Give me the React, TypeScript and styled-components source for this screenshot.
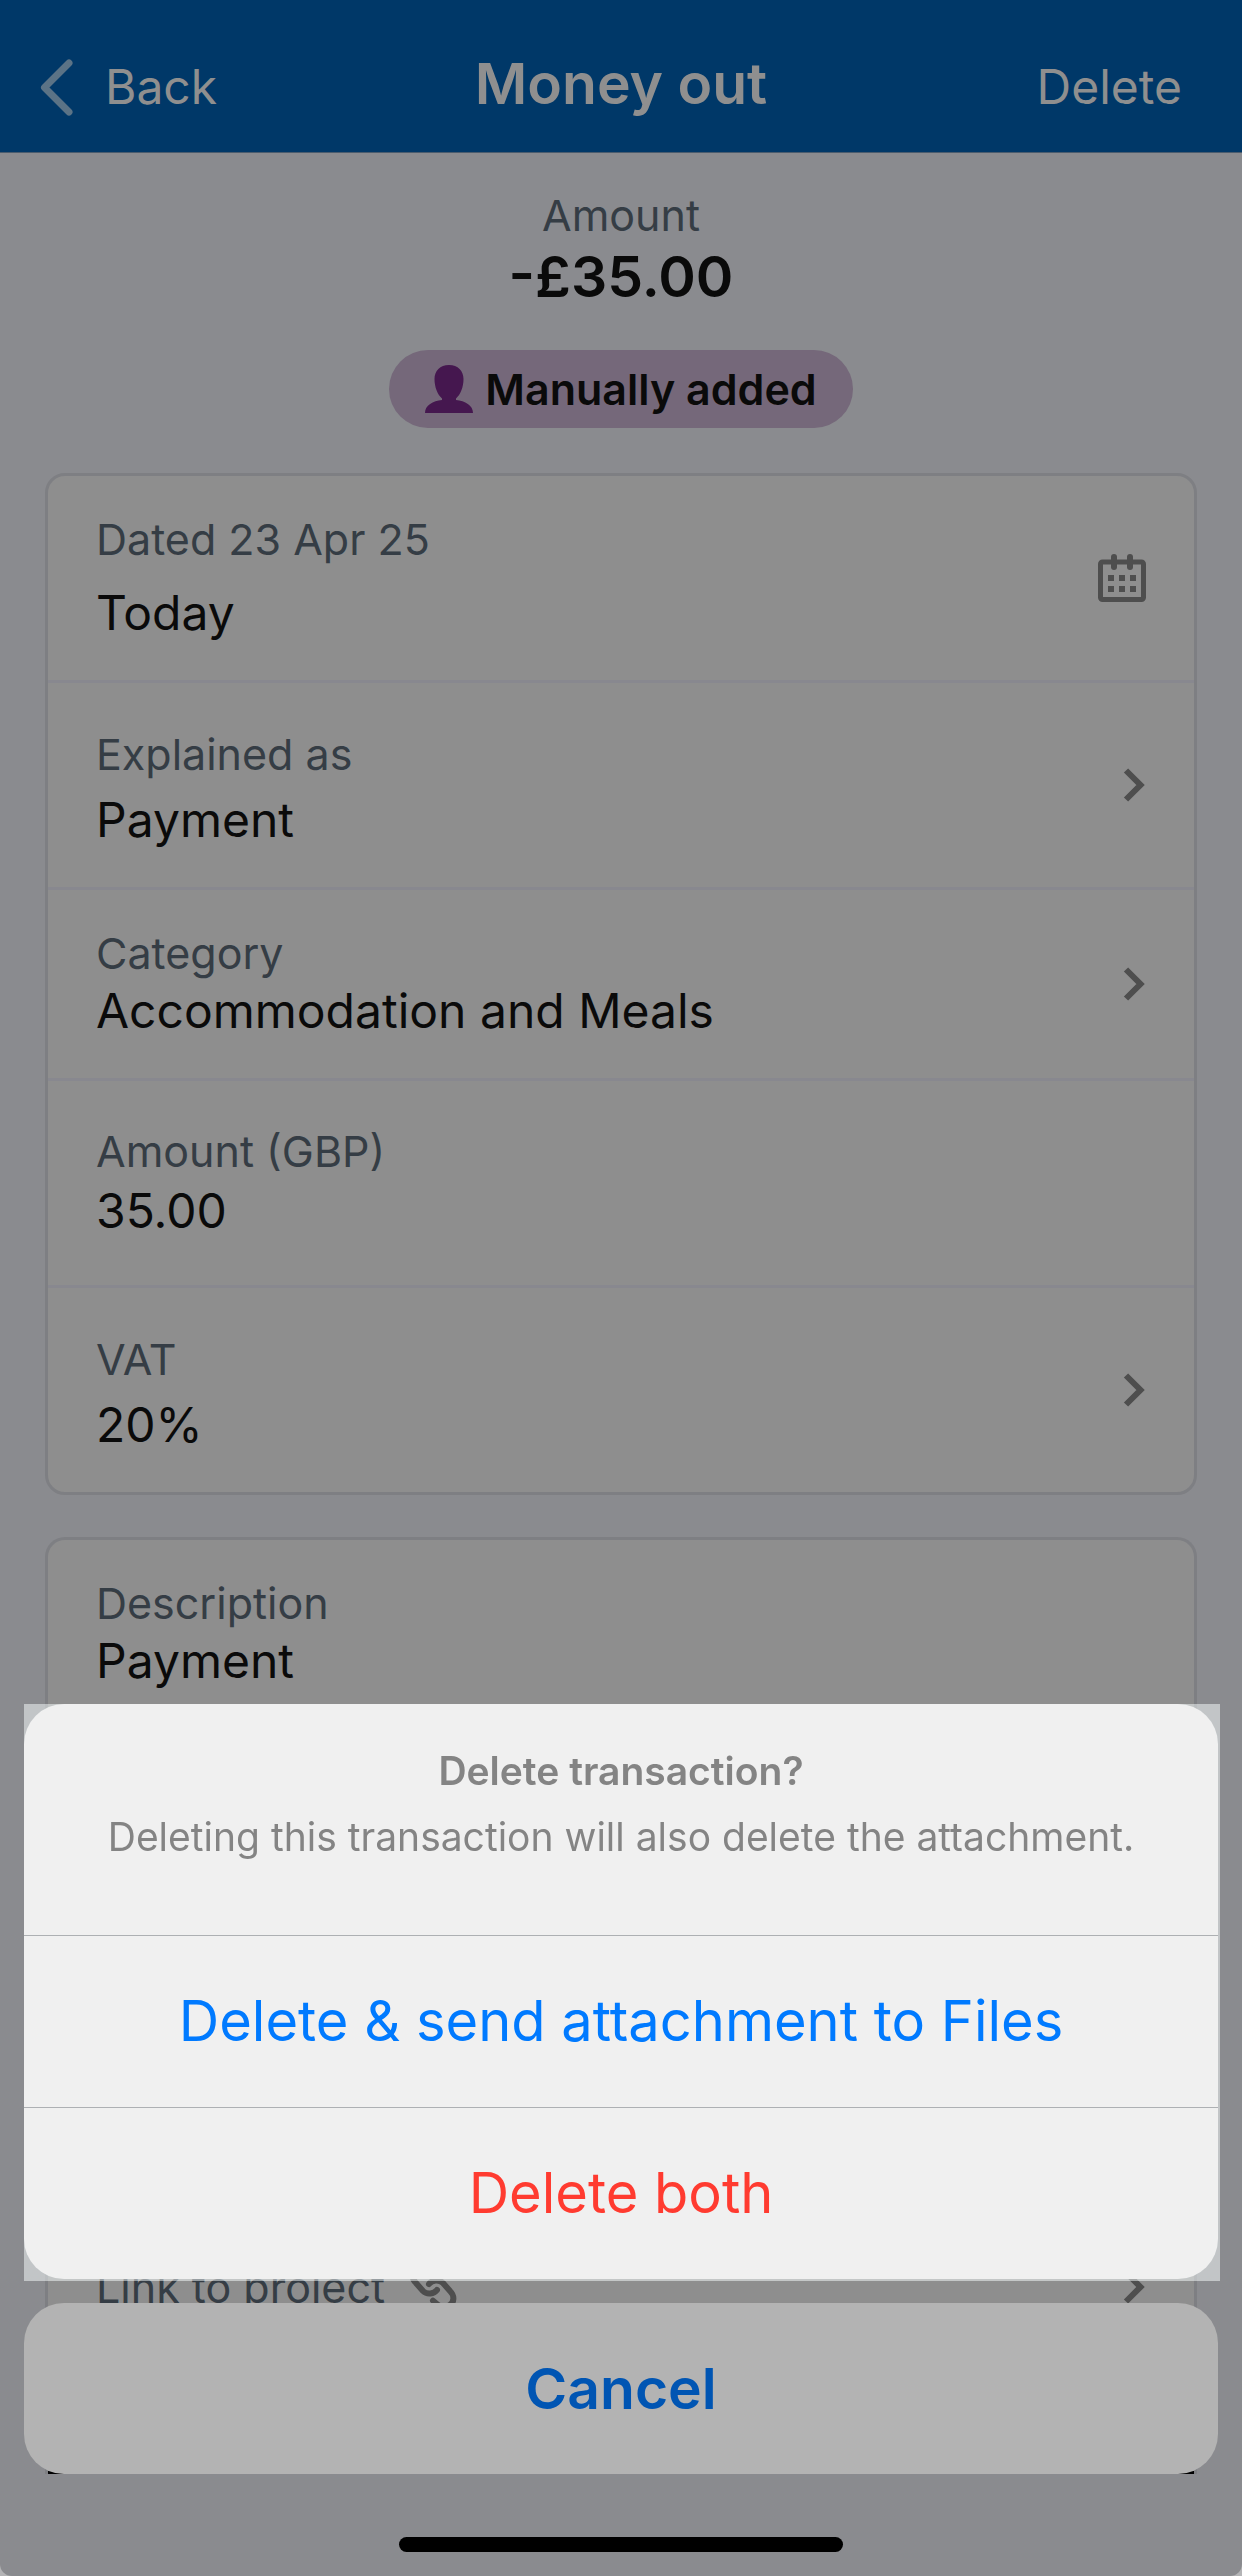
import React from "react";
import styled, { createGlobalStyle } from "styled-components";

const GlobalStyle = createGlobalStyle`
  *, *::before, *::after { box-sizing: border-box; }
  html { background: #b4b4b6; }
  body {
    margin: 0;
    font-family: Inter, Roboto, "Liberation Sans", sans-serif;
    color: #0a0a0a;
  }
  button {
    margin: 0;
    padding: 0;
    border: 0;
    background: none;
    font: inherit;
    color: inherit;
    text-align: inherit;
    cursor: pointer;
  }
`;

const Screen = styled.div`
  min-height: 100vh;
  display: flex;
  flex-direction: column;
  background: #8a8b8f;
  border-radius: 0 0 12px 12px;
  overflow: hidden;
`;

const Header = styled.header`
  display: grid;
  grid-template-columns: 1fr auto 1fr;
  align-items: end;
  padding: 48px 40px 32px;
  background: #003868;
  border-bottom: 1px solid #4a5c6e;
  color: #8f8f8f;
`;

const HeaderButton = styled.button<{ $end?: boolean }>`
  display: flex;
  align-items: center;
  justify-self: ${(p) => (p.$end ? "end" : "start")};
  gap: 32px;
  padding-right: ${(p) => (p.$end ? "20px" : "0")};
  font-size: 48px;
  line-height: 66px;
`;

const Title = styled.h1`
  margin: 0;
  font-size: 57px;
  font-weight: 600;
  line-height: 72px;
`;

const Content = styled.main`
  flex: 1;
  display: flex;
  flex-direction: column;
  padding: 0 45px;
`;

const Summary = styled.section`
  display: flex;
  flex-direction: column;
  align-items: center;
  padding: 36px 0 45px;
`;

const Label = styled.span`
  font-size: 43px;
  line-height: 52px;
  color: #353d45;
`;

const Total = styled.strong`
  font-size: 57px;
  font-weight: 600;
  line-height: 72px;
`;

const Tag = styled.span`
  display: flex;
  align-items: center;
  gap: 12px;
  margin-top: 37px;
  padding: 0 36px;
  border-radius: 39px;
  background: #75687a;
  font-size: 43px;
  font-weight: 600;
  line-height: 78px;
`;

const Card = styled.section<{ $grow?: boolean }>`
  display: flex;
  flex-direction: column;
  flex: ${(p) => (p.$grow ? "1" : "none")};
  border: 3px solid #7e7f83;
  border-bottom-width: ${(p) => (p.$grow ? "0" : "3px")};
  border-radius: ${(p) => (p.$grow ? "20px 20px 0 0" : "20px")};
  background: #8e8e8e;
  & + & { margin-top: 42px; }
`;

const Row = styled.button<{ $roomy?: boolean }>`
  display: flex;
  align-items: center;
  justify-content: space-between;
  padding: ${(p) => (p.$roomy ? "44px" : "37px")} 48px;
  & + &, & + div { border-top: 3px solid #88888f; }
`;

const Field = styled.span<{ $gap: number; $drop?: boolean }>`
  display: flex;
  flex-direction: column;
  gap: ${(p) => p.$gap}px;
  padding-top: ${(p) => (p.$drop ? "8px" : "0")};
`;

const Value = styled.span`
  font-size: 48px;
  line-height: 60px;
`;

const AttachmentArea = styled.div`
  height: 492px;
  border-bottom: 3px solid #88888f;
`;

const LinkRow = styled.button`
  display: flex;
  align-items: center;
  justify-content: space-between;
  padding: 41px 48px;
`;

const LinkLabel = styled(Label)`
  display: flex;
  align-items: center;
  gap: 24px;
`;

const CardEnd = styled.div`
  flex: 1;
  border-top: 3px solid #88888f;
  border-bottom: 3px solid #000;
`;

const SafeArea = styled.footer`
  height: 102px;
`;

const Overlay = styled.div`
  position: fixed;
  inset: 0;
  display: flex;
  flex-direction: column;
  justify-content: flex-end;
  padding: 0 22px 0 24px;
`;

const SheetBacking = styled.div`
  padding: 0 2px 2px 0;
  background: rgba(250, 255, 255, 0.5);
`;

const Sheet = styled.section`
  display: flex;
  flex-direction: column;
  border-radius: 40px;
  background: #f0f0f0;
  overflow: hidden;
`;

const SheetHead = styled.div`
  display: flex;
  flex-direction: column;
  align-items: center;
  gap: 14px;
  padding: 41px 40px 72px;
  color: #848484;
  font-size: 39px;
  line-height: 52px;
`;

const SheetTitle = styled.h2`
  margin: 0;
  font-size: 39px;
  font-weight: 600;
  line-height: 52px;
`;

const SheetText = styled.p`
  margin: 0;
`;

const SheetButton = styled.button<{ $danger?: boolean }>`
  border-top: 1px solid #adb0b3;
  color: ${(p) => (p.$danger ? "#ff3b30" : "#007aff")};
  font-size: 56px;
  line-height: 171px;
  text-align: center;
`;

const CancelButton = styled.button`
  margin: 22px 2px 0 0;
  border-radius: 40px;
  background: #b3b3b3;
  color: #0055b3;
  font-size: 57px;
  font-weight: 600;
  line-height: 171px;
  text-align: center;
`;

const HomeZone = styled.div`
  display: flex;
  align-items: flex-end;
  justify-content: center;
  height: 102px;
  padding: 0 2px 24px 0;
`;

const HomeIndicator = styled.div`
  width: 444px;
  height: 15px;
  border-radius: 8px;
  background: #000;
`;

const BackIcon = () => (
  <svg width="33" height="57" viewBox="0 0 33 57" fill="none" aria-hidden="true">
    <path d="M29 4 4.500 28.500 29 53" stroke="#5b7386" strokeWidth="7" strokeLinecap="round" strokeLinejoin="round" />
  </svg>
);

const Chevron = () => (
  <svg width="23" height="34" viewBox="0 0 23 34" fill="none" aria-hidden="true">
    <path d="M3 2.500 17.500 17 3 31.500" stroke="#4e4e4e" strokeWidth="6" />
  </svg>
);

const CalendarIcon = () => (
  <svg width="48" height="48" viewBox="0 0 48 48" fill="#4e4e4e" aria-hidden="true">
    <rect x="2.500" y="8" width="43" height="37.500" rx="2" fill="none" stroke="#4e4e4e" strokeWidth="5" />
    <rect x="13" y="0" width="6" height="16" rx="3" />
    <rect x="29" y="0" width="6" height="16" rx="3" />
    {[10, 21, 32].map((x) => (
      <React.Fragment key={x}>
        <rect x={x} y="21" width="6" height="6" />
        <rect x={x} y="32" width="6" height="6" />
      </React.Fragment>
    ))}
  </svg>
);

const PersonIcon = () => (
  <svg width="48" height="48" viewBox="0 0 48 48" fill="#45174f" aria-hidden="true">
    <path d="M24 0c9 0 14.500 6 14.500 14 0 8-3 15.500-7.500 19.500v1.500c9 1 17 5 17 13H0c0-8 8-12 17-13v-1.500C12.500 29.500 9.500 22 9.500 14 9.500 6 15 0 24 0z" />
  </svg>
);

const linkHalf = "M-4-3C-1-7 6-8 10-4L17 4C22 9 21 15 17 18C13 21 8 20 5 18L0 13.700";

const ChainIcon = () => (
  <svg width="48" height="48" viewBox="-24 -24 48 48" fill="none" stroke="#4e4e4e" strokeWidth="6" strokeLinecap="round" aria-hidden="true">
    <path d={linkHalf} />
    <path d={linkHalf} transform="rotate(180)" />
  </svg>
);

type FieldRowProps = {
  label: string;
  value: string;
  gap: number;
  drop?: boolean;
  roomy?: boolean;
  icon?: React.ReactNode;
};

const FieldRow = ({ label, value, gap, drop, roomy, icon }: FieldRowProps) => (
  <Row type="button" $roomy={roomy}>
    <Field $gap={gap} $drop={drop}>
      <Label>{label}</Label>
      <Value>{value}</Value>
    </Field>
    {icon}
  </Row>
);

export default function App() {
  return (
    <>
      <GlobalStyle />
      <Screen>
        <Header>
          <HeaderButton type="button">
            <BackIcon />
            Back
          </HeaderButton>
          <Title>Money out</Title>
          <HeaderButton type="button" $end>
            Delete
          </HeaderButton>
        </Header>
        <Content>
          <Summary>
            <Label>Amount</Label>
            <Total>-£35.00</Total>
            <Tag>
              <PersonIcon />
              Manually added
            </Tag>
          </Summary>
          <Card>
            <FieldRow label="Dated 23 Apr 25" value="Today" gap={18} icon={<CalendarIcon />} />
            <FieldRow label="Explained as" value="Payment" gap={10} drop icon={<Chevron />} />
            <FieldRow label="Category" value="Accommodation and Meals" gap={2} icon={<Chevron />} />
            <FieldRow label="Amount (GBP)" value="35.00" gap={4} roomy />
            <FieldRow label="VAT" value="20%" gap={10} drop icon={<Chevron />} />
          </Card>
          <Card $grow>
            <FieldRow label="Description" value="Payment" gap={2} />
            <AttachmentArea />
            <LinkRow type="button">
              <LinkLabel>
                Link to project
                <ChainIcon />
              </LinkLabel>
              <Chevron />
            </LinkRow>
            <CardEnd />
          </Card>
        </Content>
        <SafeArea />
      </Screen>
      <Overlay>
        <SheetBacking>
          <Sheet role="dialog" aria-labelledby="sheet-title">
            <SheetHead>
              <SheetTitle id="sheet-title">Delete transaction?</SheetTitle>
              <SheetText>Deleting this transaction will also delete the attachment.</SheetText>
            </SheetHead>
            <SheetButton type="button">Delete &amp; send attachment to Files</SheetButton>
            <SheetButton type="button" $danger>
              Delete both
            </SheetButton>
          </Sheet>
        </SheetBacking>
        <CancelButton type="button">Cancel</CancelButton>
        <HomeZone>
          <HomeIndicator />
        </HomeZone>
      </Overlay>
    </>
  );
}
